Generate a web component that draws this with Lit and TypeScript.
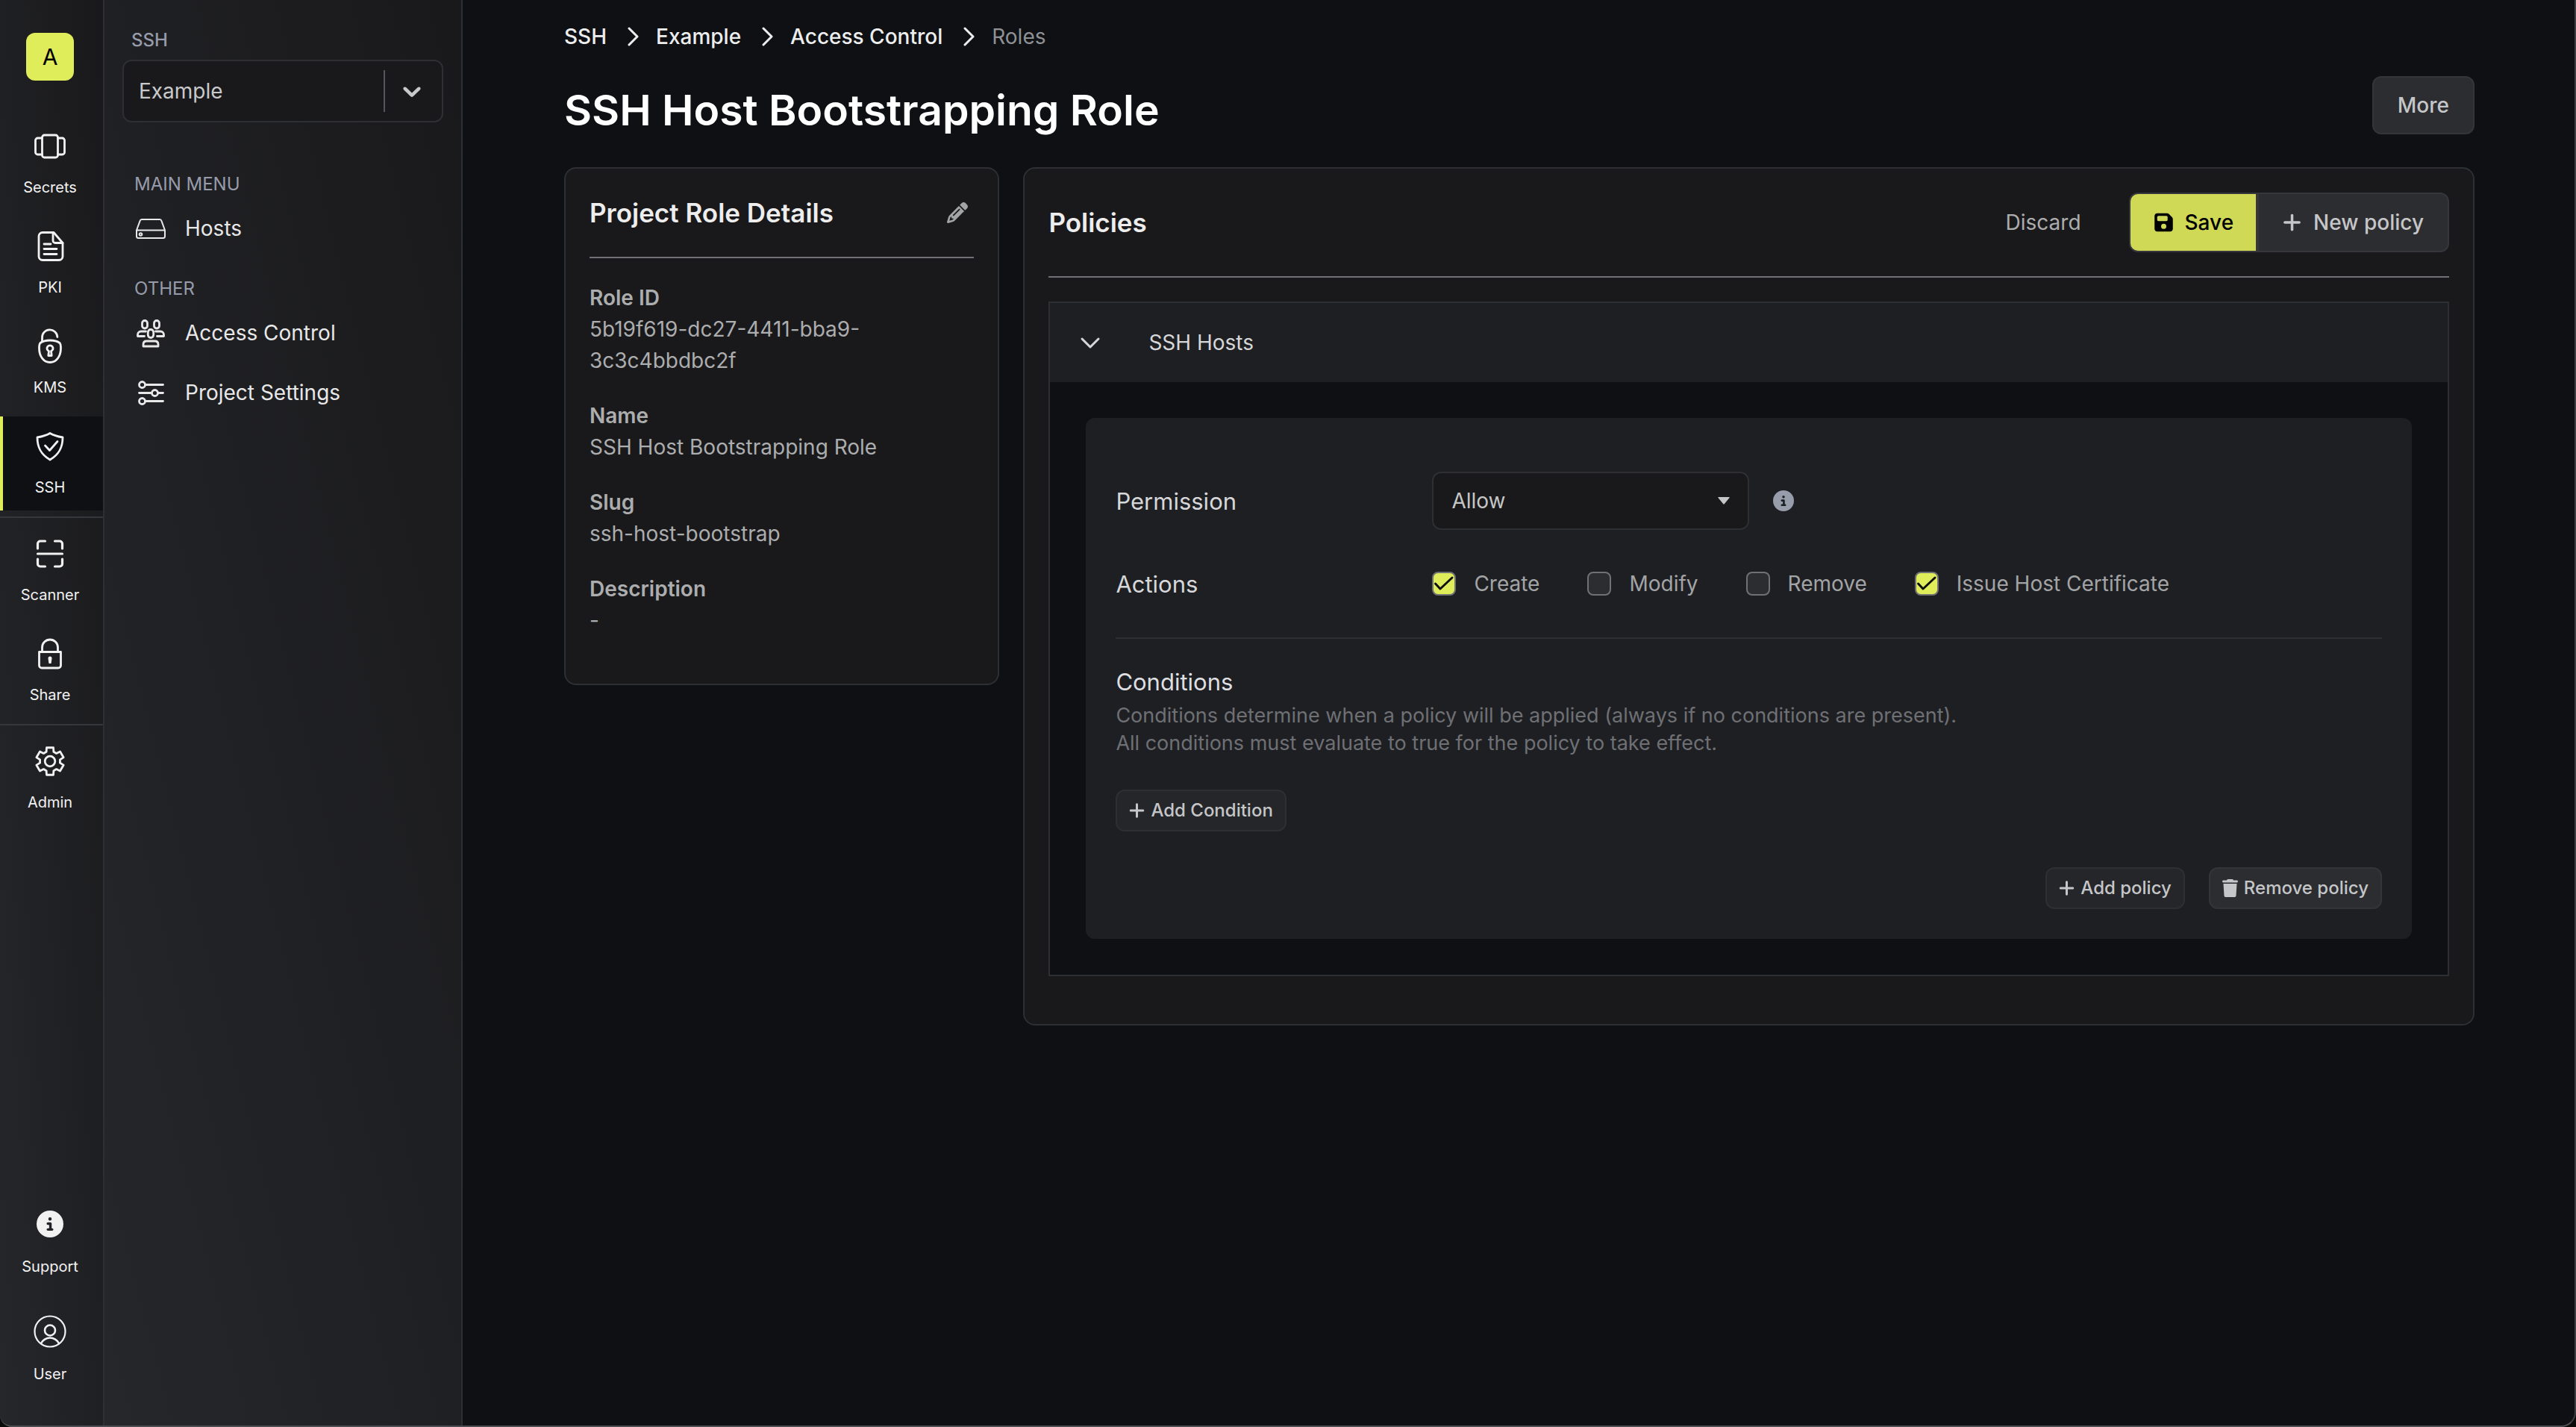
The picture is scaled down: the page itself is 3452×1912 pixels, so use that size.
import { LitElement, html, css, svg, nothing } from "lit";
import { customElement, property, state } from "lit/decorators.js";
import { classMap } from "lit/directives/class-map.js";

const gearPath = (() => {
  const pts: string[] = [];
  const at = (r: number, deg: number) => {
    const a = (deg * Math.PI) / 180;
    return `${(24 + r * Math.cos(a)).toFixed(2)} ${(24 + r * Math.sin(a)).toFixed(2)}`;
  };
  for (let k = 0; k < 6; k++) {
    const c = -90 + 60 * k;
    pts.push(at(13.6, c - 21), at(18.8, c - 14), at(18.8, c + 14), at(13.6, c + 21));
  }
  return `M${pts.join("L")}Z`;
})();

/* Outline icons share a 48-unit box and are stroked with the current colour. */
const outline: Record<string, unknown> = {
  secrets: svg`<rect x="13.5" y="9" width="21" height="30" rx="3"/><path d="M13.5 13H7.5a3 3 0 0 0-3 3v16a3 3 0 0 0 3 3h6M34.5 13h6a3 3 0 0 1 3 3v16a3 3 0 0 1-3 3h-6"/>`,
  pki: svg`<path d="M29 5.500H14a5 5 0 0 0-5 5v27a5 5 0 0 0 5 5h22a5 5 0 0 0 5-5V19.500Z"/><path d="M28 5.500v11a3 3 0 0 0 3 3h10M16 21h9M16 27.500h17M16 34.500h17"/>`,
  kms: svg`<path d="M24 16c-5 0-9.500 1-13 3.500-1 1-1.500 3-1.500 7C9.500 38 16 45.500 24 45.500S38.500 38 38.500 26.500c0-4-.5-6-1.500-7C33.500 17 29 16 24 16Z"/><path d="M13.500 17.500V12.500a10.200 10.200 0 0 1 20.400-1M22.500 30.500a4 4 0 1 1 3 0l.7 6h-4.400Z"/>`,
  ssh: svg`<path d="M24 6.500C19 9.500 13 11 7 12c0 14 5 23 17 30 12-7 17-16 17-30-6-1-12-2.500-17-5.500Z"/><path d="m17.500 23 6 6.500 10.500-12"/>`,
  scanner: svg`<path stroke-width="3.200" d="M7.500 17V10.500a3.500 3.500 0 0 1 3.500-3.500h6.500M30.500 7H37a3.500 3.500 0 0 1 3.500 3.500V17M7.500 31v6.500A3.500 3.500 0 0 0 11 41h6.500M30.500 41H37a3.500 3.500 0 0 0 3.500-3.500V31M7.500 24h33"/>`,
  share: svg`<path d="M9.500 21.500h29v18a3.500 3.500 0 0 1-3.500 3.500H13a3.500 3.500 0 0 1-3.500-3.500ZM13.500 21.500V15.500a10.500 10.500 0 0 1 21 0v6"/><path stroke-width="2" d="M24 28.500a1.500 1.500 0 0 1 1.500 1.500l-.8 6h-1.400l-.8-6A1.500 1.500 0 0 1 24 28.500Z" fill="currentColor"/>`,
  admin: svg`<path d=${gearPath}/><circle cx="24" cy="24" r="6.800"/>`,
  user: svg`<circle stroke-width="2.200" cx="24" cy="24" r="20.500"/><circle stroke-width="2.600" cx="24" cy="22.500" r="7"/><path stroke-width="2.600" d="M12 40c2-4.500 7-7.500 12-7.500s10 3 12 7.500"/>`,
  hosts: svg`<path stroke-width="2" d="M12 12h24a2.500 2.500 0 0 1 2.400 1.800L43 26.500v8a2.500 2.500 0 0 1-2.500 2.500h-33A2.500 2.500 0 0 1 5 34.500v-8l4.600-12.700A2.500 2.500 0 0 1 12 12ZM5 26.500h38"/><circle stroke-width="2" cx="10.500" cy="32" r="1.800"/>`,
  access: svg`<rect x="12.500" y="7.500" width="7" height="10.500" rx="3.500"/><rect x="28.500" y="7.500" width="7" height="10.500" rx="3.500"/><rect x="20.300" y="19.500" width="7.400" height="11" rx="3.700"/><path d="M17.500 22h-6.500a4.500 4.500 0 0 0-4.500 4.500v2h9M30.500 22H37a4.500 4.500 0 0 1 4.500 4.500v2h-9M14 42v-2.500c0-3 2-4.500 4.500-4.500h11c2.500 0 4.500 1.500 4.500 4.500V42Z"/>`,
  settings: svg`<path d="M16.500 13.500H40.500M8.500 24.500H25M34 24.500h6.500M16.500 35.500H40.500"/><circle cx="12.500" cy="13.500" r="4"/><circle cx="29.500" cy="24.500" r="4"/><circle cx="12.500" cy="35.500" r="4"/>`,
};

/* Solid icons: view box width, view box height, path. */
const solid: Record<string, [number, number, string]> = {
  info: [512, 512, "M256 512A256 256 0 1 0 256 0a256 256 0 1 0 0 512zM216 336h24V272H216c-13.3 0-24-10.7-24-24s10.7-24 24-24h48c13.3 0 24 10.7 24 24v88h8c13.3 0 24 10.7 24 24s-10.700 24-24 24H216c-13.300 0-24-10.700-24-24s10.700-24 24-24zm40-208a32 32 0 1 1 0 64 32 32 0 1 1 0-64z"],
  pencil: [512, 512, "M410.3 231l11.3-11.3-33.9-33.9-62.1-62.1L291.7 89.8l-11.3 11.3-22.6 22.6L58.6 322.9c-10.4 10.4-18 23.3-22.2 37.4L1 480.7c-2.5 8.4-.2 17.5 6.1 23.7s15.3 8.5 23.7 6.1l120.3-35.4c14.1-4.2 27-11.8 37.4-22.2L387.7 253.7 410.3 231zM160 399.4l-9.1 22.7c-4 3.1-8.5 5.4-13.3 6.9L59.4 452l23-78.1c1.4-4.9 3.8-9.4 6.9-13.3l22.7-9.1v32c0 8.8 7.2 16 16 16h32zM362.7 18.7L348.3 33.2 325.7 55.8 314.3 67.1l33.9 33.9 62.1 62.1 33.9 33.9 11.3-11.3 22.6-22.6 14.5-14.5c25-25 25-65.5 0-90.5L453.3 18.7c-25-25-65.5-25-90.5 0zm-47.4 168l-144 144c-6.200 6.200-16.400 6.200-22.600 0s-6.200-16.400 0-22.600l144-144c6.200-6.200 16.400-6.200 22.600 0s6.200 16.400 0 22.600z"],
  save: [448, 512, "M64 32C28.7 32 0 60.7 0 96V416c0 35.3 28.7 64 64 64H384c35.3 0 64-28.7 64-64V173.3c0-17-6.7-33.3-18.7-45.3L352 50.7C340 38.7 323.7 32 306.7 32H64zm0 96c0-17.7 14.3-32 32-32H288c17.7 0 32 14.3 32 32v64c0 17.7-14.3 32-32 32H96c-17.7 0-32-14.3-32-32V128zM224 288a64 64 0 1 1 0 128 64 64 0 1 1 0-128z"],
  plus: [448, 512, "M256 80c0-17.7-14.3-32-32-32s-32 14.3-32 32V224H48c-17.7 0-32 14.3-32 32s14.3 32 32 32H192V432c0 17.7 14.3 32 32 32s32-14.3 32-32V288H400c17.7 0 32-14.3 32-32s-14.3-32-32-32H256V80z"],
  trash: [448, 512, "M135.2 17.7L128 32H32C14.3 32 0 46.3 0 64S14.3 96 32 96H416c17.7 0 32-14.3 32-32s-14.3-32-32-32H320l-7.2-14.3C307.4 6.8 296.3 0 284.2 0H163.8c-12.1 0-23.2 6.8-28.6 17.7zM416 128H32L53.2 467c1.6 25.3 22.6 45 47.9 45H346.9c25.3 0 46.3-19.7 47.9-45L416 128z"],
  chevron: [20, 20, "M4.516 7.548c0.436-0.446 1.043-0.481 1.576 0l3.908 3.747 3.908-3.747c0.533-0.481 1.141-0.446 1.574 0 0.436 0.445 0.408 1.197 0 1.615-0.406 0.418-4.695 4.502-4.695 4.502-0.217 0.223-0.502 0.335-0.787 0.335s-0.570-0.112-0.789-0.335c0 0-4.287-4.084-4.695-4.502s-0.436-1.170 0-1.615z"],
  caret: [16, 10, "M1 0H15Q16.400 0 15.500 1.100L8.700 9.300Q8 10 7.300 9.300L.5 1.100Q-.4 0 1 0Z"],
};

const line = (name: string) => html`<svg class="line-icon" width="48" height="48" viewBox="0 0 48 48" aria-hidden="true">${outline[name]}</svg>`;
const fill = (name: string, height: number) => {
  const [w, h, d] = solid[name];
  return html`<svg class="fill-icon" width=${Math.round((height * w) / h)} height=${height} viewBox="0 0 ${w} ${h}" aria-hidden="true"><path d=${d} /></svg>`;
};

const shared = css`
  *, *::before, *::after { box-sizing: border-box; }
  a { color: inherit; text-decoration: none; }
  button, select, input { font: inherit; color: inherit; margin: 0; }
  button { cursor: pointer; background: none; border: 0; padding: 0; }
  svg { display: block; flex: none; }
  .line-icon { fill: none; stroke: currentColor; stroke-width: 2.8; stroke-linecap: round; stroke-linejoin: round; }
  .fill-icon { fill: currentColor; }
  h1, h2, h3, p, dl, dd, ul, ol { margin: 0; padding: 0; }
  ul, ol { list-style: none; }
`;

interface RailEntry { icon: string; label: string; }

@customElement("product-rail")
class ProductRail extends LitElement {
  @property() active = "SSH";

  static styles = [shared, css`
    :host { display: flex; flex-direction: column; align-items: stretch; gap: 8px; width: 140px; padding: 44px 0 40px; color: #f1f1f2; border-right: 2px solid #2d2f33; background: linear-gradient(to top right, #26272b, #19191b); }
    .org { width: 64px; height: 64px; margin: 0 0 40px 35px; border-radius: 12px; background: #e0ed5a; color: #000; font-size: 30px; line-height: 64px; text-align: center; }
    .entry { display: flex; flex-direction: column; align-items: center; gap: 16px; padding: 16px 8px 16px 0; border-left: 4px solid transparent; font-size: 20px; line-height: 30px; }
    .entry.active { background: #0e1014; border-left-color: #e0ed5a; }
    .symbol { display: flex; align-items: center; justify-content: center; height: 48px; }
    .rule { height: 2px; border: 0; margin: 0; background: #35373c; }
    .spacer { flex: 1; }
    .foot { gap: 18px; }
    .support { margin-bottom: 8px; }
  `];

  private entry({ icon, label }: RailEntry, foot = false) {
    return html`<a href="#" class=${classMap({ entry: true, active: label === this.active, foot, support: icon === "info" })}>
      <span class="symbol">${solid[icon] ? fill(icon, 36) : line(icon)}</span><span>${label}</span>
    </a>`;
  }

  render() {
    return html`
      <button class="org" aria-label="Organization">A</button>
      ${this.entry({ icon: "secrets", label: "Secrets" })}
      ${this.entry({ icon: "pki", label: "PKI" })}
      ${this.entry({ icon: "kms", label: "KMS" })}
      ${this.entry({ icon: "ssh", label: "SSH" })}
      <hr class="rule" />
      ${this.entry({ icon: "scanner", label: "Scanner" })}
      ${this.entry({ icon: "share", label: "Share" })}
      <hr class="rule" />
      ${this.entry({ icon: "admin", label: "Admin" })}
      <div class="spacer"></div>
      ${this.entry({ icon: "info", label: "Support" }, true)}
      ${this.entry({ icon: "user", label: "User" }, true)}
    `;
  }
}

@customElement("project-menu")
class ProjectMenu extends LitElement {
  static styles = [shared, css`
    :host { display: block; width: 480px; padding: 38px 24px 0; border-right: 2px solid #2d2f33; background: linear-gradient(to top right, #26272b, #19191b); color: #e8e8e9; font-size: 28px; }
    .project-label { display: block; padding-left: 12px; margin-bottom: 10px; font-size: 24px; line-height: 32px; font-weight: 500; color: #969cab; }
    .picker { display: grid; grid-template-columns: 1fr auto; align-items: center; height: 84px; border: 2px solid #2d2f33; border-radius: 12px; background: #19191b; color: #c8c9cb; }
    .picker select { grid-area: 1 / 1 / 2 / 3; height: 100%; width: 100%; appearance: none; border: 0; border-radius: 12px; background: transparent; padding: 0 96px 0 20px; line-height: 42px; }
    .picker .mark { grid-area: 1 / 2; display: flex; align-items: center; height: 56px; padding: 0 20px 0 16px; border-left: 2px solid #55575d; pointer-events: none; }
    .menu { padding: 66px 0 0 14px; }
    .group { margin-bottom: 24px; }
    .group-title { padding: 0 0 2px 2px; font-size: 24px; line-height: 34px; font-weight: 400; color: #969cab; }
    .link { display: flex; align-items: center; gap: 22px; height: 80px; }
  `];

  private group(title: string, items: [string, string][]) {
    return html`<section class="group">
      <h2 class="group-title">${title}</h2>
      <ul>${items.map(([icon, label]) => html`<li><a class="link" href="#">${line(icon)}<span>${label}</span></a></li>`)}</ul>
    </section>`;
  }

  render() {
    return html`
      <label class="project-label" for="project">SSH</label>
      <div class="picker">
        <select id="project"><option>Example</option></select>
        <span class="mark">${fill("chevron", 40)}</span>
      </div>
      <nav class="menu">
        ${this.group("MAIN MENU", [["hosts", "Hosts"]])}
        ${this.group("OTHER", [["access", "Access Control"], ["settings", "Project Settings"]])}
      </nav>
    `;
  }
}

@customElement("role-details")
class RoleDetails extends LitElement {
  static styles = [shared, css`
    :host { display: block; padding: 32px 32px 32px; border: 2px solid #2d2f33; border-radius: 16px; background: #19191b; color: #acadaf; font-size: 28px; line-height: 42px; }
    .head { display: flex; align-items: center; justify-content: space-between; height: 88px; padding-bottom: 32px; border-bottom: 2px solid #707174; margin-bottom: 32px; }
    .title { font-size: 35px; line-height: 54px; font-weight: 600; color: #ededee; }
    .edit { padding: 8px; color: #a3a4a6; }
    .field { margin-bottom: 32px; }
    .field dt { font-weight: 600; }
    .field dd { max-width: 400px; }
  `];

  private fields: [string, string][] = [
    ["Role ID", "5b19f619-dc27-4411-bba9-3c3c4bbdbc2f"],
    ["Name", "SSH Host Bootstrapping Role"],
    ["Slug", "ssh-host-bootstrap"],
    ["Description", "-"],
  ];

  render() {
    return html`
      <div class="head"><h2 class="title">Project Role Details</h2><button class="edit" aria-label="Edit role">${fill("pencil", 28)}</button></div>
      <dl>${this.fields.map(([k, v]) => html`<div class="field"><dt>${k}</dt><dd>${v}</dd></div>`)}</dl>
    `;
  }
}

@customElement("role-policies")
class RolePolicies extends LitElement {
  @state() private open = true;

  static styles = [shared, css`
    :host { display: block; padding: 32px 32px 64px; border: 2px solid #2d2f33; border-radius: 16px; background: #19191b; color: #c5c6c8; font-size: 28px; line-height: 42px; }
    .head { display: flex; align-items: center; height: 114px; padding-bottom: 32px; border-bottom: 2px solid #707174; margin-bottom: 32px; }
    .title { flex: 1; font-size: 35px; line-height: 54px; font-weight: 600; color: #ededee; }
    .discard { padding: 0 32px; margin-right: 32px; color: #acadaf; font-weight: 400; }
    .pair { display: flex; }
    .save, .create { display: flex; align-items: center; gap: 16px; height: 80px; padding: 0 32px; border: 2px solid #35373c; font-weight: 500; }
    .save { padding-right: 30px; background: #cfd955; color: #000; border-radius: 12px 0 0 12px; }
    .create { background: #2c2d31; border-radius: 0 12px 12px 0; }
    .rule-set { border: 2px solid #2d2f33; background: #0e1014; }
    .toggle { display: flex; align-items: center; width: 100%; height: 106px; gap: 64px; padding: 0 40px; background: #1e1f23; color: #d6d7d9; text-align: left; }
    .toggle svg { fill: none; stroke: currentColor; stroke-width: 3; stroke-linecap: round; stroke-linejoin: round; }
    .body { padding: 48px; }
    .policy { padding: 72px 40px 40px; border-radius: 12px; background: #1e1f23; }
    .row { display: grid; grid-template-columns: 424px 1fr; align-items: center; }
    .name { padding-top: 2px; font-size: 31px; line-height: 46px; color: #d6d7d9; }
    .permission { height: 78px; margin-bottom: 48px; }
    .choice { display: flex; align-items: center; gap: 32px; }
    .picker { display: grid; grid-template-columns: 1fr auto; align-items: center; width: 425px; height: 78px; border: 2px solid #2d2f33; border-radius: 12px; background: #19191b; }
    .picker select { grid-area: 1 / 1 / 2 / 3; width: 100%; height: 100%; appearance: none; border: 0; border-radius: 12px; background: transparent; padding: 0 64px 0 24px; }
    .picker svg { grid-area: 1 / 2; margin-right: 24px; pointer-events: none; }
    .hint { color: #989dab; }
    .actions { height: 48px; margin-bottom: 48px; }
    .checks { display: flex; gap: 64px; color: #a3a4a6; }
    .check { display: flex; align-items: center; gap: 24px; cursor: pointer; }
    .box { display: grid; width: 32px; height: 32px; }
    .box input { grid-area: 1 / 1; appearance: none; width: 32px; height: 32px; border: 2px solid #707174; border-radius: 8px; background: #2c2d31; }
    .box input:checked { background: #e0ed5a; }
    .box svg { grid-area: 1 / 1; visibility: hidden; pointer-events: none; fill: none; stroke: #0e1014; stroke-width: 3; stroke-linecap: round; stroke-linejoin: round; }
    .box input:checked + svg { visibility: visible; }
    .conditions { border-top: 2px solid #2d2f33; padding-top: 34px; margin-bottom: 48px; }
    .conditions h3 { margin-bottom: 2px; font-size: 31px; line-height: 48px; font-weight: 400; color: #dedfe0; }
    .conditions p { margin-bottom: 44px; font-size: 27px; line-height: 37px; color: #6e7074; }
    .small { display: flex; align-items: center; gap: 8px; height: 56px; padding: 0 16px; border: 2px solid #2d2f33; border-radius: 12px; background: #25262a; font-size: 24px; line-height: 32px; font-weight: 500; }
    .small.strong { background: #2c2d31; border-color: #33353a; }
    .foot { display: flex; justify-content: flex-end; gap: 32px; }
  `];

  private check(label: string, on: boolean) {
    return html`<label class="check">
      <span class="box"><input type="checkbox" .checked=${on} /><svg width="32" height="32" viewBox="0 0 32 32"><path d="M4.500 16 11 23 27 8" /></svg></span>
      <span>${label}</span>
    </label>`;
  }

  private policy() {
    return html`<div class="body"><div class="policy">
      <div class="row permission">
        <label class="name" for="permission">Permission</label>
        <div class="choice">
          <div class="picker"><select id="permission"><option>Allow</option><option>Forbid</option></select>${fill("caret", 10)}</div>
          <span class="hint">${fill("info", 28)}</span>
        </div>
      </div>
      <div class="row actions">
        <span class="name">Actions</span>
        <div class="checks">
          ${this.check("Create", true)}${this.check("Modify", false)}${this.check("Remove", false)}${this.check("Issue Host Certificate", true)}
        </div>
      </div>
      <div class="conditions">
        <h3>Conditions</h3>
        <p>Conditions determine when a policy will be applied (always if no conditions are present).<br />All conditions must evaluate to true for the policy to take effect.</p>
        <button class="small">${fill("plus", 24)}<span>Add Condition</span></button>
      </div>
      <div class="foot">
        <button class="small">${fill("plus", 24)}<span>Add policy</span></button>
        <button class="small strong">${fill("trash", 24)}<span>Remove policy</span></button>
      </div>
    </div></div>`;
  }

  render() {
    return html`
      <div class="head">
        <h2 class="title">Policies</h2>
        <button class="discard">Discard</button>
        <div class="pair">
          <button class="save">${fill("save", 28)}<span>Save</span></button>
          <button class="create">${fill("plus", 28)}<span>New policy</span></button>
        </div>
      </div>
      <div class="rule-set">
        <button class="toggle" aria-expanded=${this.open} @click=${() => (this.open = !this.open)}>
          <svg width="28" height="20" viewBox="0 0 28 20" aria-hidden="true"><path d="M3 5 14 16 25 5" /></svg><span>SSH Hosts</span>
        </button>
        ${this.open ? this.policy() : nothing}
      </div>
    `;
  }
}

@customElement("app-root")
class AppRoot extends LitElement {
  static styles = [shared, css`
    :host { display: flex; min-height: 100vh; background: #0e1014; font-family: Inter, "Liberation Sans", sans-serif; font-size: 28px; line-height: 42px; color: #c5c6c8; }
    product-rail, project-menu { flex: none; }
    .main { flex: 1; min-width: 0; padding: 28px 64px 64px; }
    .page { max-width: 2560px; margin: 0 auto; }
    .crumbs { display: flex; align-items: center; font-weight: 500; color: #ededee; }
    .crumbs li { display: flex; align-items: center; }
    .crumbs svg { margin: 0 22px 0 28px; fill: none; stroke: currentColor; stroke-width: 3; stroke-linecap: round; stroke-linejoin: round; }
    .crumbs .current { color: #8f9194; font-weight: 400; }
    .heading { display: flex; align-items: flex-end; justify-content: space-between; margin: 32px 0 44px; }
    .heading h1 { font-size: 57px; line-height: 64px; font-weight: 600; color: #fff; }
    .more { height: 78px; padding: 0 32px; border: 2px solid #33353a; border-radius: 12px; background: #2c2d31; font-weight: 500; }
    .cards { display: grid; grid-template-columns: 3fr 10fr; align-items: start; gap: 32px; }
    .frame { position: fixed; inset: 0; border-right: 2px solid #3b3d41; border-bottom: 2px solid #4d4e53; border-radius: 0 0 20px 16px; box-shadow: 0 0 0 16px #0a0b08; pointer-events: none; }
  `];

  render() {
    const next = html`<svg width="16" height="28" viewBox="0 0 16 28" aria-hidden="true"><path d="M2 3 13 14 2 25" /></svg>`;
    return html`
      <product-rail active="SSH"></product-rail>
      <project-menu></project-menu>
      <main class="main">
        <div class="page">
          <nav aria-label="Breadcrumb">
            <ol class="crumbs">
              ${["SSH", "Example", "Access Control"].map((c) => html`<li><a href="#">${c}</a>${next}</li>`)}
              <li class="current" aria-current="page">Roles</li>
            </ol>
          </nav>
          <header class="heading"><h1>SSH Host Bootstrapping Role</h1><button class="more">More</button></header>
          <div class="cards"><role-details></role-details><role-policies></role-policies></div>
        </div>
      </main>
      <div class="frame"></div>
    `;
  }
}
